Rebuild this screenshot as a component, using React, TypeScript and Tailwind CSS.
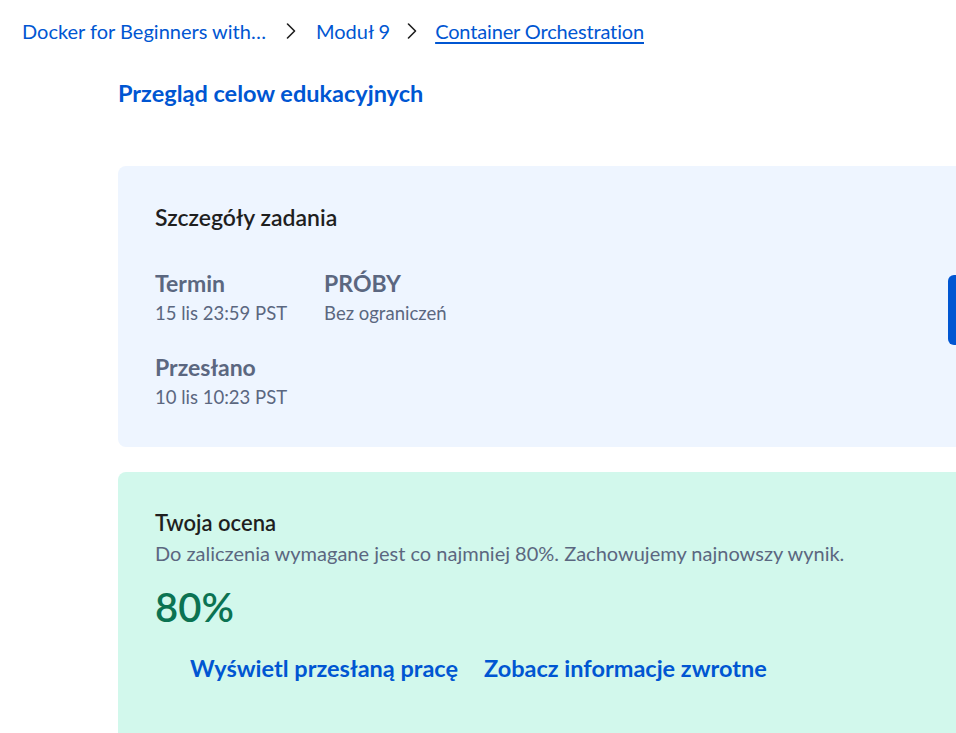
import { ChevronRight } from "lucide-react"

const font = { fontFamily: '"Source Sans Pro", Lato, "Noto Sans", sans-serif' }

function Detail({ label, value }: { label: string; value: string }) {
  return (
    <div className="flex flex-col">
      <span className="text-[23px] leading-[28px] font-bold text-[#5b6780]">{label}</span>
      <span className="text-[18.5px] leading-[32px] text-[#5b6780]">{value}</span>
    </div>
  )
}

export default function App() {
  return (
    <div className="h-[733px] w-[956px] overflow-hidden bg-white" style={font}>
      {/* Breadcrumbs */}
      <nav className="flex items-center h-[62px] pl-[22px] text-[20px] text-[#0056d2]">
        <a className="hover:underline">Docker for Beginners with…</a>
        <ChevronRight className="w-7 h-7 mx-[11px] text-[#1f1f1f]" strokeWidth={1.4} />
        <a className="hover:underline">Moduł 9</a>
        <ChevronRight className="w-7 h-7 ml-[8px] mr-[9px] text-[#1f1f1f]" strokeWidth={1.4} />
        <a className="underline underline-offset-[3px] tracking-[-0.15px]">Container Orchestration</a>
      </nav>

      <div className="ml-[118px] mr-[-24px]">
        <a className="block mt-[16px] text-[23.5px] leading-[30px] font-bold text-[#0056d2]">
          Przegląd celow edukacyjnych
        </a>

        {/* Details card */}
        <section className="relative mt-[58px] h-[281px] rounded-lg bg-[#eef5ff] pl-[37px] pt-[36px]">
          <h2 className="text-[23px] leading-[30px] font-semibold text-[#1f1f1f]">Szczegóły zadania</h2>
          <div className="mt-[37px] flex gap-[37px]">
            <Detail label="Termin" value="15 lis 23:59 PST" />
            <Detail label="PRÓBY" value="Bez ograniczeń" />
          </div>
          <div className="mt-[24px]">
            <Detail label="Przesłano" value="10 lis 10:23 PST" />
          </div>
          <div className="absolute left-[830px] top-[109px] h-[70px] w-[40px] rounded-md bg-[#0056d2]" />
        </section>

        {/* Grade card */}
        <section className="mt-[25px] h-[300px] rounded-lg bg-[#d2f8ec] pl-[37px] pt-[37px]">
          <h2 className="text-[22px] leading-[28px] font-semibold text-[#1f1f1f]">Twoja ocena</h2>
          <p className="text-[20px] leading-[32px] text-[#5b6780]">
            Do zaliczenia wymagane jest co najmniej 80%. Zachowujemy najnowszy wynik.
          </p>
          <div className="mt-[16px] text-[40px] leading-[44px] font-semibold text-[#0b7352]">80%</div>
          <div className="mt-[25px] ml-[35px] flex gap-[26px] text-[23.5px] leading-[28px] font-bold text-[#0056d2]">
            <a>Wyświetl przesłaną pracę</a>
            <a>Zobacz informacje zwrotne</a>
          </div>
        </section>
      </div>
    </div>
  )
}
